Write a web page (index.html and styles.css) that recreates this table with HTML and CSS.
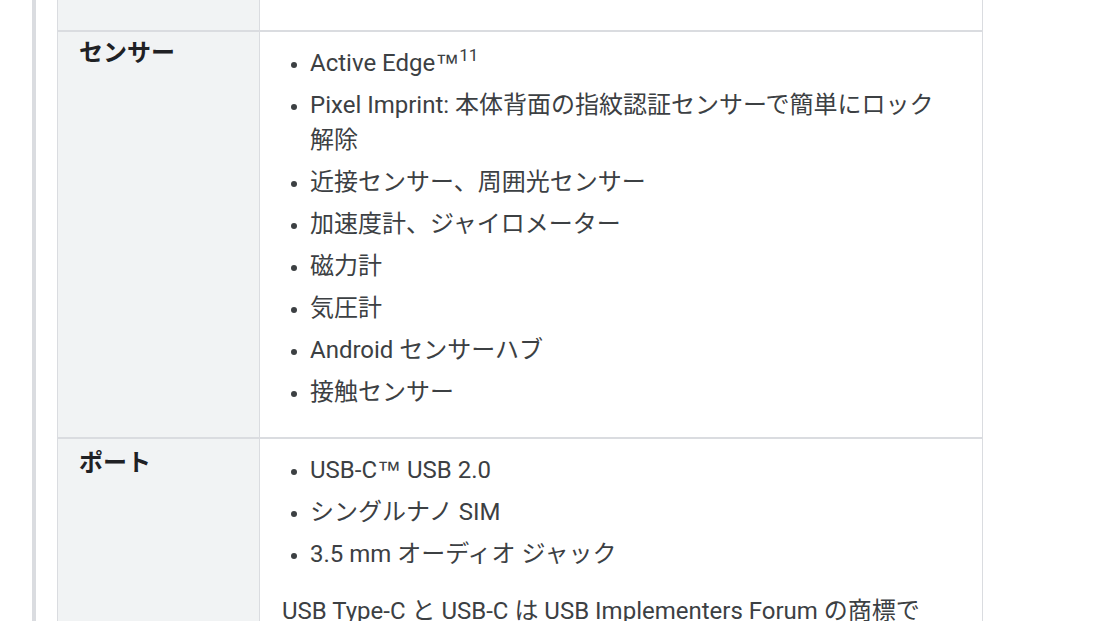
FILE: index.html
```html
<!DOCTYPE html>
<html lang="ja">
<head>
<meta charset="utf-8">
<link rel="stylesheet" href="styles.css">
</head>
<body>
<div class="page">
  <div class="rule"></div>
  <table class="spec">
    <tr class="row-top">
      <th class="label"></th>
      <td class="content"></td>
    </tr>
    <tr class="row">
      <th class="label">センサー</th>
      <td class="content">
        <ul class="list">
          <li>Active Edge<span class="tm">™</span><sup>11</sup></li>
          <li>Pixel Imprint: 本体背面の指紋認証センサーで簡単にロック解除</li>
          <li>近接センサー、周囲光センサー</li>
          <li>加速度計、ジャイロメーター</li>
          <li>磁力計</li>
          <li>気圧計</li>
          <li>Android センサーハブ</li>
          <li>接触センサー</li>
        </ul>
      </td>
    </tr>
    <tr class="row">
      <th class="label label-port">ポート</th>
      <td class="content">
        <ul class="list">
          <li>USB-C<span class="tm">™</span> USB 2.0</li>
          <li>シングルナノ SIM</li>
          <li>3.5 mm オーディオ ジャック</li>
        </ul>
        <p class="note">USB Type-C と USB-C は USB Implementers Forum の商標です。</p>
      </td>
    </tr>
  </table>
</div>
</body>
</html>
```
FILE: styles.css
```css
html, body {
  margin: 0;
  padding: 0;
  background: #fff;
}
body {
  font-family: Roboto, "Noto Sans CJK JP", sans-serif;
  color: #3c4043;
  overflow: hidden;
  height: 621px;
}
.page {
  display: flex;
  align-items: flex-start;
  padding-left: 32px;
  margin-top: -159px;
}
.rule {
  width: 4px;
  align-self: stretch;
  background: #dadce0;
  margin-right: 21px;
}
.spec {
  border-collapse: collapse;
  width: 926px;
  border: 1px solid #dadce0;
}
.spec th, .spec td {
  vertical-align: top;
  text-align: left;
  padding: 0;
}
.row-top .label, .row-top .content {
  height: 148px;
}
.row {
  border-top: 2px solid #dadce0;
}
.label {
  width: 202px;
  background: #f1f3f4;
  border-right: 1px solid #dadce0;
  font-size: 24px;
  font-weight: 700;
  color: #202124;
  line-height: 35px;
  box-sizing: border-box;
}
.spec th.label {
  padding: 4px 20px 0 21px;
}
.spec th.label-port {
  padding-top: 7px;
}
.spec td.content {
  padding: 13px 32px 27px 22px;
  font-size: 24px;
  line-height: 35px;
}
.list {
  margin: 0;
  padding-left: 28px;
}
.list li {
  margin-bottom: 7px;
}
.list li::marker {
  font-size: 20px;
}
.list li:last-child {
  margin-bottom: 0;
}
.tm {
  font-family: "Liberation Sans", sans-serif;
}
.list sup {
  font-size: 17px;
  line-height: 0;
  vertical-align: 10px;
}
.note {
  margin: 22px 0 0;
}
```
